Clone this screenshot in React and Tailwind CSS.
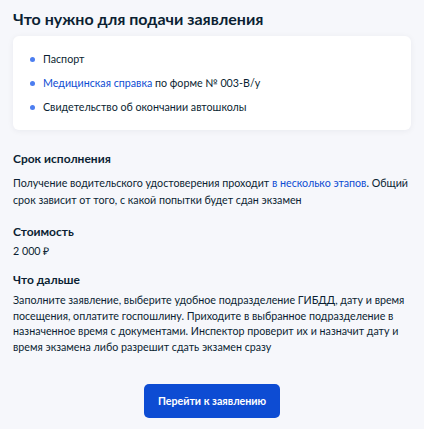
export default function App() {
  const docs = [
    { link: "", text: "Паспорт" },
    { link: "Медицинская справка", text: " по форме № 003-В/у" },
    { link: "", text: "Свидетельство об окончании автошколы" },
  ];

  return (
    <div className="min-h-[429px] w-[424px] bg-[#f6f7fb] px-[13px] pt-[6px] pb-[10px] font-['Lato',sans-serif] text-[#0b1f33]">
      <h2 className="text-[16px] font-bold leading-[26px]">Что нужно для подачи заявления</h2>

      {/* список документов */}
      <div className="mt-[4px] rounded-[6px] bg-white px-[17px] pt-[14px] pb-[14px] shadow-[0_1px_6px_rgba(11,31,51,0.06)]">
        <ul className="flex flex-col gap-[6px]">
          {docs.map((d, i) => (
            <li key={i} className="flex items-center gap-[8px] text-[10.7px] leading-[18px]">
              <span className="h-[5px] w-[5px] rounded-full bg-[#4c7ef0]" />
              <span>
                {d.link && <span className="text-[#0d4cd3]">{d.link}</span>}
                {d.text}
              </span>
            </li>
          ))}
        </ul>
      </div>

      <section className="mt-[20px]">
        <h3 className="text-[12px] font-bold leading-[18px]">Срок исполнения</h3>
        <p className="mt-[6px] text-[10.7px] leading-[17px]">
          Получение водительского удостоверения проходит <span className="text-[#0d4cd3]">в несколько этапов</span>. Общий срок зависит от того, с какой попытки будет сдан экзамен
        </p>
      </section>

      <section className="mt-[15px]">
        <h3 className="text-[12px] font-bold leading-[18px]">Стоимость</h3>
        <p className="mt-[1px] text-[10.7px] leading-[17px]">2 000 ₽</p>
      </section>

      <section className="mt-[12px]">
        <h3 className="text-[12px] font-bold leading-[18px]">Что дальше</h3>
        <p className="mt-[3px] text-[10.7px] leading-[15.5px]">
          Заполните заявление, выберите удобное подразделение ГИБДД, дату и время посещения, оплатите госпошлину. Приходите в выбранное подразделение в назначенное время с документами. Инспектор проверит их и назначит дату и время экзамена либо разрешит сдать экзамен сразу
        </p>
      </section>

      <div className="mt-[30px] flex justify-center">
        <button className="h-[34px] w-[136px] rounded-[5px] bg-[#0d4cd3] text-[10.7px] font-bold text-white">
          Перейти к заявлению
        </button>
      </div>
    </div>
  );
}
